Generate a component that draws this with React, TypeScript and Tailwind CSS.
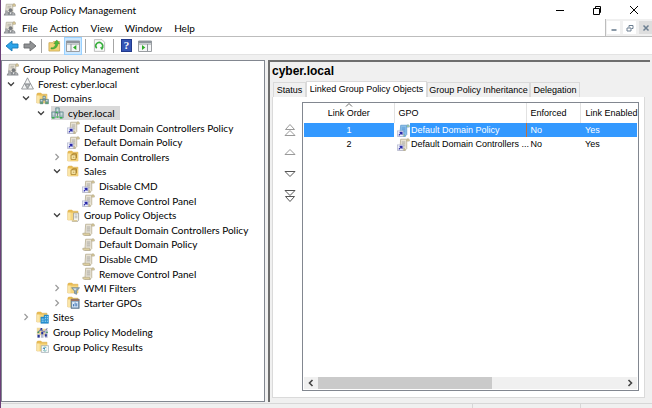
import { useState, type ReactNode } from "react";

type IconName =
  | "console" | "forest" | "domains" | "domain" | "link" | "ou" | "gpoFolder" | "gpo"
  | "wmi" | "starter" | "sites" | "modeling" | "results" | "selectedLink";

function Parchment({ blue = false }: { blue?: boolean }) {
  const paper = blue ? "#8fc0ea" : "#efe9d8";
  const edge = blue ? "#4c8fca" : "#a59a7c";
  const curl = blue ? "#c8dc8c" : "#e3d4a2";
  return (
    <g>
      <path d="M4.5 1.5h9l-1.5 2v9.5l-2 2H3.5z" fill={paper} stroke={edge} strokeWidth=".8" />
      <path d="M12 3.8V2.6c0-1 .7-1.6 1.6-1.6s1.6.6 1.6 1.6v1.2z" fill={curl} stroke={edge} strokeWidth=".7" />
      <path d="M1 12.6h8.5c-.4 1.2 0 2.4 1 2.6H2.6C1.4 15.2.8 14 1 12.6z" fill={curl} stroke={edge} strokeWidth=".7" />
      <path d="M5.6 3.5h4.8v8.2H5.4z" fill={blue ? "#78b2e4" : "#d3d0c8"} />
      <path d="M6 5h4M6 7h4M6 9h4" stroke={blue ? "#5f9ed6" : "#b9b5aa"} strokeWidth=".8" />
    </g>
  );
}

function Folder() {
  return (
    <g>
      <path d="M1 2.5 2 1.3h4.2l1 1.4h6.3v10.8H1z" fill="#e9bd55" stroke="#d8ab48" strokeWidth=".6" />
      <path d="M1.2 4.4h12.2v9H1.2z" fill="#f7d780" />
      <path d="M1.3 4.4h3v9h-3z" fill="#fbe6a8" />
    </g>
  );
}

function Shortcut() {
  return (
    <g>
      <rect x=".5" y="8.5" width="7" height="7" fill="#eef0fb" stroke="#a5a9c4" strokeWidth=".7" />
      <path d="M2.2 14 5.6 10.6M3.2 10.3h2.9v2.9" fill="none" stroke="#2929a8" strokeWidth="1.5" />
    </g>
  );
}

const art: Record<IconName, ReactNode> = {
  console: (
    <g>
      <path d="M4 1.5h9.5L12 4v9H3z" fill="#e8e4d8" stroke="#a9a492" strokeWidth=".8" />
      <path d="M12 4V2.5c0-2 3.3-2 3.3 0V4z" fill="#e8d69c" stroke="#9c927b" strokeWidth=".7" />
      <path d="M5.5 4h4.5M5.3 6h4" stroke="#aaa79d" />
      <path d="M1 15.3c0-2 1-3 3-3.4l2-.9 4-.2 3.5 1c1.3.6 1.8 1.7 1.8 3.5z" fill="#8a8d91" />
      <circle cx="9.3" cy="8.8" r="2.4" fill="#777a7e" />
      <circle cx="4.3" cy="10.8" r="1.8" fill="#a3a5a8" />
      <path d="m8.4 11.8 1 2.2 1.1-2.2" fill="#fff" />
      <path d="M3 13.5h3M11.5 13.5H14" stroke="#d6d7d8" />
    </g>
  ),
  forest: (
    <g fill="#f4f5f5" stroke="#85898c" strokeWidth="1">
      <path d="M8 1 11.8 8.5H4.2z" />
      <path d="M4.3 8 8 14.8H.7z" />
      <path d="M11.7 8 15.3 14.8H8z" />
      <path d="M5.5 9h5L8 13z" fill="#c7caca" />
    </g>
  ),
  domains: (
    <g>
      <Folder />
      <path d="M8.5 5h3v5h-3zM5 9h3.6v5.5H5zM11.4 9h4v5.5h-4z" fill="#86a3a8" stroke="#52777d" strokeWidth=".6" />
      <path d="M9 6.5h2M5.8 10.6h2M12.2 10.6h2" stroke="#e1f1f2" />
      <path d="M5.5 13.6h2.7M12 13.6h3" stroke="#3ca04a" strokeWidth="1.4" />
    </g>
  ),
  domain: (
    <g>
      <path d="M8 6v5M3.5 6.5h9" stroke="#59797e" />
      <path d="M5.8 1h4.4v6.5H5.8zM1 6h4.2v7.5H1zM10.8 6H15v7.5h-4.2z" fill="#9db9bc" stroke="#5d8287" strokeWidth=".8" />
      <path d="M7 2.7h2M7 4.4h2M2 7.8h2.2M2 9.6h2.2M11.8 7.8H14M11.8 9.6H14" stroke="#edf8f8" strokeWidth=".9" />
      <path d="M6.2 6.6h2M1.3 13.3h2.8M11 13.3h2.8M6.6 12.3h2.8" stroke="#35b449" strokeWidth="1.7" />
    </g>
  ),
  link: <g><Parchment /><Shortcut /></g>,
  selectedLink: <g><Parchment blue /><Shortcut /></g>,
  ou: (
    <g>
      <Folder />
      <path d="M5 6h6v5.5H5z" fill="#fff0b6" stroke="#a17a25" strokeWidth="1" />
      <path d="M7 6V4.6h4.6v5.2M7 8.8h2.2" fill="none" stroke="#a17a25" strokeWidth="1" />
    </g>
  ),
  gpoFolder: (
    <g>
      <Folder />
      <path d="M8 5h6.3v8.5l-1.2 1.8H6.5l1.5-2z" fill="#f7f5ef" stroke="#8f8d85" strokeWidth=".8" />
      <path d="M9.3 7.2h3.5M9.3 9h3.5M9.3 10.8h3.5" stroke="#9aa0a4" strokeWidth=".8" />
      <path d="M5.7 13.4h6.7v2H6.5z" fill="#dccb98" />
    </g>
  ),
  gpo: <Parchment />,
  wmi: (
    <g>
      <Folder />
      <path d="M5.6 7h9.9l-3.7 4.2v4L9.2 14v-2.8z" fill="#91a9b9" stroke="#637f91" strokeWidth=".8" />
      <path d="M7.5 8h4.3l-1.7 2.4z" fill="#dfeaf0" />
    </g>
  ),
  starter: (
    <g>
      <Folder />
      <path d="M5 4h10v11.3H5z" fill="#7895b2" stroke="#576d84" strokeWidth=".8" />
      <path d="M5 4h10v2H5z" fill="#9d6b58" />
      <path d="M6.3 7h7.3v7H6.3z" fill="#dcebfb" />
      <path d="M8 12.8V10M10 12.8V8M12 12.8V9" stroke="#4376b5" strokeWidth="1.2" />
    </g>
  ),
  sites: (
    <g>
      <Folder />
      <path d="M6 7.5h4V5h5.3v10.2H6z" fill="#2790d0" stroke="#197dba" strokeWidth=".6" />
      <path d="M11.2 7h1.2m1 0h1.2m-3.4 2.5h1.2m1 0h1.2M7 10h1.4m.8 0h1m-3.2 2.5h1.4m.8 0h1m1 0h1.2m1 0h1.2" stroke="#c4edff" strokeWidth="1.2" />
    </g>
  ),
  modeling: (
    <g>
      <path d="M1 2h5l1 1.3h6v8H1z" fill="#f0d896" />
      <path d="M2 8.5 6 4l4 3.5L14 3" fill="none" stroke="#777db0" strokeWidth="1.3" />
      <path d="M1.5 9.5h3.2v5H1.5zM6 7h3.3v7.5H6zM11 5h3.3v9.5H11z" fill="#b4b9cc" />
      <path d="M2 11h2.5v3H2zM6.5 7h2.4v3H6.5zM10.8 10h2.5v3h-2.5zM5.7 2.5h2v2h-2z" fill="#263398" />
      <path d="M2 7.7h2M12.5 7.8h2" stroke="#3f9b62" strokeWidth="1.6" />
    </g>
  ),
  results: (
    <g>
      <Folder />
      <path d="M6.5 7h9v8.3h-9z" fill="#f7f9fa" stroke="#93a0a8" strokeWidth=".8" />
      <path d="M9 9.7c1-1.5 3.5-1.2 4 .4M9 12.3c.8 1.7 3 1.7 4 .2" fill="none" stroke="#55aaa9" strokeWidth="1.1" />
      <path d="M8 9.8h3v2.4z" fill="#347db8" />
    </g>
  ),
};

function Icon({ name }: { name: IconName }) {
  return (
    <svg viewBox="0 0 16 16" className="size-[13px] shrink-0" aria-hidden="true">
      {art[name]}
    </svg>
  );
}

type Level = 0 | 1 | 2 | 3 | 4 | 5;
const indent: Record<Level, string> = {
  0: "pl-[4px]",
  1: "pl-[4px]",
  2: "pl-[19px]",
  3: "pl-[34px]",
  4: "pl-[50px]",
  5: "pl-[65px]",
};

type Node = { label: string; icon: IconName; level: Level; open?: boolean };

const nodes: Node[] = [
  { label: "Group Policy Management", icon: "console", level: 0 },
  { label: "Forest: cyber.local", icon: "forest", level: 1, open: true },
  { label: "Domains", icon: "domains", level: 2, open: true },
  { label: "cyber.local", icon: "domain", level: 3, open: true },
  { label: "Default Domain Controllers Policy", icon: "link", level: 4 },
  { label: "Default Domain Policy", icon: "link", level: 4 },
  { label: "Domain Controllers", icon: "ou", level: 4, open: false },
  { label: "Sales", icon: "ou", level: 4, open: true },
  { label: "Disable CMD", icon: "link", level: 5 },
  { label: "Remove Control Panel", icon: "link", level: 5 },
  { label: "Group Policy Objects", icon: "gpoFolder", level: 4, open: true },
  { label: "Default Domain Controllers Policy", icon: "gpo", level: 5 },
  { label: "Default Domain Policy", icon: "gpo", level: 5 },
  { label: "Disable CMD", icon: "gpo", level: 5 },
  { label: "Remove Control Panel", icon: "gpo", level: 5 },
  { label: "WMI Filters", icon: "wmi", level: 4, open: false },
  { label: "Starter GPOs", icon: "starter", level: 4, open: false },
  { label: "Sites", icon: "sites", level: 2, open: false },
  { label: "Group Policy Modeling", icon: "modeling", level: 2 },
  { label: "Group Policy Results", icon: "results", level: 2 },
];

function Chevron({ open }: { open: boolean }) {
  return (
    <svg viewBox="0 0 8 8" className="size-2" fill="none" aria-hidden="true">
      {open ? (
        <path d="m1 2.5 3 3 3-3" stroke="#3f3f3f" strokeWidth="1.3" />
      ) : (
        <path d="m2.5 1 3 3-3 3" stroke="#9a9a9a" strokeWidth="1.2" />
      )}
    </svg>
  );
}

function Tree() {
  const [selected, setSelected] = useState(3);
  return (
    <ul role="tree" aria-label="Console tree" className="grid h-[293px] auto-rows-fr pt-px">
      {nodes.map((n, i) => (
        <li
          key={i}
          role="treeitem"
          aria-level={n.level + 1}
          aria-expanded={n.open}
          aria-selected={i === selected}
          className={`flex min-h-0 items-center ${indent[n.level]}`}
        >
          {n.level > 0 && (
            <span className="flex w-[15px] shrink-0 items-center pl-px">
              {n.open !== undefined && (
                <button type="button" aria-label={`${n.open ? "Collapse" : "Expand"} ${n.label}`}>
                  <Chevron open={n.open} />
                </button>
              )}
            </span>
          )}
          <button
            type="button"
            onClick={() => setSelected(i)}
            className={`flex h-[14px] items-center gap-[4px] pr-[5px] whitespace-nowrap ${i === selected ? "bg-[#d9d9d9]" : ""}`}
          >
            <Icon name={n.icon} />
            {n.label}
          </button>
        </li>
      ))}
    </ul>
  );
}

function Arrow({ forward = false }: { forward?: boolean }) {
  return (
    <svg viewBox="0 0 14 12" className="h-3 w-3.5" aria-hidden="true">
      {forward ? (
        <path d="M1 4h6V1l6 5-6 5V8H1z" fill="#909294" stroke="#696b6d" strokeWidth=".9" />
      ) : (
        <path d="M13 4H7V1L1 6l6 5V8h6z" fill="#2ca4ea" stroke="#177bb8" strokeWidth=".9" />
      )}
    </svg>
  );
}

function Pane({ right = false }: { right?: boolean }) {
  return (
    <svg viewBox="0 0 14 12" className="h-3 w-3.5" aria-hidden="true">
      <path d="M.5 1h13v10.5H.5z" fill="#f4f5f6" stroke="#999da1" />
      <path d="M.5 1h13v2.4H.5z" fill="#8d949b" />
      <path d="M1 4.4h12" stroke="#bfc3c6" />
      <path d={right ? "M9.5 4v7" : "M5 4v7"} stroke="#8d949b" />
      <path d={right ? "M4 5v5l3.3-2.5z" : "M10.3 5v5L7 7.5z"} fill="#2cab26" />
    </svg>
  );
}

function UpFolder() {
  return (
    <svg viewBox="0 0 14 14" className="size-[13px]" aria-hidden="true">
      <path d="M1 4h4l1-1.3h6.5V13H1z" fill="#f3d47a" stroke="#c5a34c" strokeWidth=".8" />
      <path d="M3.2 9.5c3 .2 4.7-1.6 5-4.5H6.3l3.2-4 2.8 4h-1.8c-.2 4-3 6.2-7.3 5.8z" fill="#4bb93a" stroke="#338c29" strokeWidth=".5" />
    </svg>
  );
}

function Refresh() {
  return (
    <svg viewBox="0 0 14 14" className="size-[13px]" aria-hidden="true">
      <path d="M1.5.7h8.2l2.8 2.8v9.8h-11z" fill="#fafafa" stroke="#aaa" strokeWidth=".8" />
      <path d="M4 10a3.7 3.7 0 1 1 5.7-.4" fill="none" stroke="#37ae3c" strokeWidth="1.7" />
      <path d="M7.5 8.8h4L9.7 12z" fill="#37ae3c" />
    </svg>
  );
}

function Divider() {
  return <span className="h-[14px] w-px shrink-0 bg-[#a6a6a6]" />;
}

function Toolbar() {
  return (
    <div role="toolbar" aria-label="Standard" className="flex h-[18px] items-center border-b border-[#e3e3e3] bg-white pl-1">
      <button type="button" aria-label="Back"><Arrow /></button>
      <button type="button" aria-label="Forward" className="mx-1"><Arrow forward /></button>
      <Divider />
      <div className="flex items-center pr-[3px] pl-1.5">
        <button type="button" aria-label="Up one level" className="mr-[3px]"><UpFolder /></button>
        <button type="button" aria-label="Show or hide console tree" aria-pressed="true" className="flex h-[18px] w-[18px] items-center justify-center border border-[#99d1ff] bg-[#cce8ff]">
          <Pane />
        </button>
      </div>
      <Divider />
      <button type="button" aria-label="Refresh" className="mx-[7px]"><Refresh /></button>
      <Divider />
      <button type="button" aria-label="Help" className="mr-[6px] ml-[7px] flex h-[13px] w-[11px] items-center justify-center border border-[#20398c] bg-[#3454b4] font-['Liberation_Serif',serif] text-[11px] leading-none font-bold text-white">
        ?
      </button>
      <button type="button" aria-label="Show or hide action pane"><Pane right /></button>
    </div>
  );
}

function WindowGlyph({ kind }: { kind: "min" | "restore" | "close" }) {
  return (
    <svg viewBox="0 0 10 10" className="size-2.5" fill="none" stroke="currentColor" aria-hidden="true">
      {kind === "min" && <path d="M1 5.5h8" />}
      {kind === "restore" && <path d="M1.5 3.5h6v6h-6zM3.5 3V1.5h5v6H8" />}
      {kind === "close" && <path d="m1 1 8 8M9 1 1 9" />}
    </svg>
  );
}

function ChildGlyph({ kind }: { kind: "min" | "restore" | "close" }) {
  return (
    <svg viewBox="0 0 8 8" className="size-2" fill="none" stroke="#6c7f91" aria-hidden="true">
      {kind === "min" && <path d="M1.5 6h5" strokeWidth="1.6" />}
      {kind === "restore" && <path d="M1 4h4v3H1zM3 3.5V1.5h4v3H5.5" />}
      {kind === "close" && <path d="m1.5 1.5 5 5M6.5 1.5l-5 5" strokeWidth="1.5" />}
    </svg>
  );
}

function OrderGlyph({ down = false, double = false }: { down?: boolean; double?: boolean }) {
  const color = down ? "#555" : "#999";
  return (
    <svg viewBox="0 0 12 14" className="h-3.5 w-3" fill="none" stroke={color} strokeWidth="1" aria-hidden="true">
      {!double && !down && <path d="M1 9.5h10L6 4.5z" />}
      {!double && down && <path d="M1 4.5h10l-5 5z" />}
      {double && !down && <path d="M1.5 6.5h9L6 1.5zM1 12.5h10L6 7.5z" />}
      {double && down && <path d="M1 1.5h10l-5 5zM1.5 7.5h9L6 12.5z" />}
    </svg>
  );
}

const tabs = ["Status", "Linked Group Policy Objects", "Group Policy Inheritance", "Delegation"];
const tabWidths = ["w-[33px]", "w-[121px]", "w-[103px]", "w-[50px]"];

const rows = [
  { order: 1, gpo: "Default Domain Policy", enforced: "No", enabled: "Yes" },
  { order: 2, gpo: "Default Domain Controllers ...", enforced: "No", enabled: "Yes" },
];

function LinksTable() {
  return (
    <table className="w-full table-fixed border-collapse text-left">
      <colgroup>
        <col className="w-[90px]" />
        <col className="w-[132px]" />
        <col className="w-[54px]" />
        <col />
      </colgroup>
      <thead>
        <tr className="h-[20px]">
          <th scope="col" className="relative border-r border-[#e2e2e2] p-0 text-center font-normal">
            Link Order
            <svg viewBox="0 0 8 4" className="absolute top-0 left-[41px] h-1 w-2" fill="none" stroke="#666" aria-hidden="true">
              <path d="m1 3.5 3-3 3 3" />
            </svg>
          </th>
          <th scope="col" className="border-r border-[#e2e2e2] p-0 pl-[4px] font-normal">GPO</th>
          <th scope="col" className="border-r border-[#e2e2e2] p-0 pl-[4px] font-normal">Enforced</th>
          <th scope="col" className="p-0 pl-[5px] font-normal whitespace-nowrap">Link Enabled</th>
        </tr>
      </thead>
      <tbody>
        {rows.map((r, i) => {
          const on = i === 0;
          const fill = on ? "bg-[#3399ff] text-white" : "";
          return (
            <tr key={r.order} className="h-[14px] leading-[14px]">
              <td className={`p-0 text-center ${fill}`}>{r.order}</td>
              <td className="p-0">
                <div className="flex h-[14px] items-center pl-[3px]">
                  <Icon name={on ? "selectedLink" : "link"} />
                  <span className={`flex-1 pl-px whitespace-nowrap ${fill}`}>{r.gpo}</span>
                </div>
              </td>
              <td className={`border-l p-0 pl-[4px] ${fill} ${on ? "border-[#c0703c]" : "border-transparent"}`}>{r.enforced}</td>
              <td className={`p-0 pl-[5px] ${fill}`}>{r.enabled}</td>
            </tr>
          );
        })}
      </tbody>
    </table>
  );
}

function ScrollArrow({ right = false }: { right?: boolean }) {
  return (
    <button type="button" aria-label={right ? "Scroll right" : "Scroll left"} className="flex w-[14px] items-center justify-center">
      <svg viewBox="0 0 6 8" className="h-2 w-1.5" fill="none" stroke="#444" strokeWidth="1.6" aria-hidden="true">
        <path d={right ? "m1.5 1 3 3-3 3" : "m4.5 1-3 3 3 3"} />
      </svg>
    </button>
  );
}

function Details() {
  const [tab, setTab] = useState(1);
  return (
    <section className="flex min-w-0 flex-1 flex-col border-t-2 border-l-2 border-[#6e6e6e] bg-[#f0f0f0] pr-[5px] pb-1 pl-[2px] font-['Liberation_Sans',sans-serif] text-[9px]">
      <h1 className="h-[19px] text-[12px] leading-[18px] font-bold">cyber.local</h1>
      <div role="tablist" className="flex h-[16px] items-end pl-px">
        {tabs.map((t, i) => (
          <button
            key={t}
            type="button"
            role="tab"
            aria-selected={i === tab}
            onClick={() => setTab(i)}
            className={`${tabWidths[i]} shrink-0 border border-b-0 border-[#dadada] text-center whitespace-nowrap ${i === tab ? "h-[16px] bg-white leading-[13px]" : "h-[15px] bg-[#f0f0f0] leading-[14px]"}`}
          >
            {t}
          </button>
        ))}
      </div>
      <div role="tabpanel" className="flex min-h-0 flex-1 border border-t-0 border-[#dadada] bg-white pt-[5px] pr-[5px] pb-[6px]">
        <div className="flex w-[29px] shrink-0 flex-col items-center gap-[8px] pt-[21px] pl-1">
          <button type="button" aria-label="Move link to top"><OrderGlyph double /></button>
          <button type="button" aria-label="Move link up"><OrderGlyph /></button>
          <button type="button" aria-label="Move link down"><OrderGlyph down /></button>
          <button type="button" aria-label="Move link to bottom"><OrderGlyph down double /></button>
        </div>
        <div className="flex min-w-0 flex-1 flex-col border border-[#828790] p-px pt-0">
          <div className="min-h-0 flex-1"><LinksTable /></div>
          <div className="flex h-3 bg-[#f0f0f0]">
            <ScrollArrow />
            <div className="flex-1"><div className="h-full w-[57%] bg-[#cacaca]" /></div>
            <ScrollArrow right />
          </div>
        </div>
      </div>
    </section>
  );
}

export default function App() {
  return (
    <div className="flex h-screen min-h-[400px] w-full flex-col overflow-hidden border-l border-[#6b3f78] bg-[#f0f0f0] font-['Lato','Open_Sans',sans-serif] text-[10px] leading-[14px] text-black">
      <header className="bg-white">
        <div className="flex h-[19px] items-center pl-[2px]">
          <Icon name="console" />
          <span className="pl-1">Group Policy Management</span>
          <div className="ml-auto flex items-center gap-[27px] pr-[13px]">
            <button type="button" aria-label="Minimize"><WindowGlyph kind="min" /></button>
            <button type="button" aria-label="Restore"><WindowGlyph kind="restore" /></button>
            <button type="button" aria-label="Close"><WindowGlyph kind="close" /></button>
          </div>
        </div>
        <div className="flex h-[18px] items-center border-b border-[#bdbdbd] pl-[2px]">
          <Icon name="console" />
          <nav aria-label="Menu" className="flex gap-[12px] pl-[6px]">
            {["File", "Action", "View", "Window", "Help"].map((m) => (
              <button key={m} type="button">{m}</button>
            ))}
          </nav>
          <div className="ml-auto flex h-full items-center gap-[3px] border-l border-[#bdbdbd] bg-[#f0f0f0] pl-px">
            <button type="button" aria-label="Minimize console" className="flex size-[13px] items-center justify-center bg-white"><ChildGlyph kind="min" /></button>
            <button type="button" aria-label="Restore console" className="flex size-[13px] items-center justify-center bg-white"><ChildGlyph kind="restore" /></button>
            <button type="button" aria-label="Close console" className="flex size-[13px] items-center justify-center bg-[#dedede]"><ChildGlyph kind="close" /></button>
          </div>
        </div>
        <Toolbar />
      </header>
      <main className="flex min-h-0 flex-1 gap-[3px] pt-[5px] pr-[2px]">
        <aside className="w-[264px] shrink-0 border border-[#828790] bg-white">
          <Tree />
        </aside>
        <Details />
      </main>
      <footer className="flex h-[6px] shrink-0 pt-px">
        <div className="flex-1 border-t border-[#d7d7d7]" />
        <div className="w-[108px] border-t border-l border-[#d7d7d7]" />
        <div className="w-[72px] border-t border-l border-[#d7d7d7]" />
      </footer>
    </div>
  );
}
